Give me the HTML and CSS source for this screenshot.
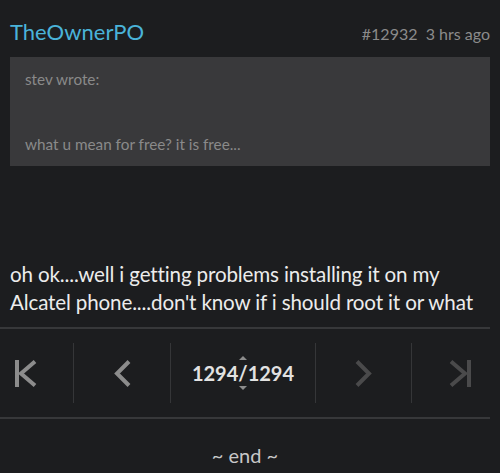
FILE: index.html
```html
<!DOCTYPE html>
<html>
<head>
<meta charset="utf-8">
<link rel="stylesheet" href="styles.css">
</head>
<body>
<div class="post">
  <div class="post-header">
    <span class="username">TheOwnerPO</span>
    <span class="meta">#12932&nbsp; 3 hrs ago</span>
  </div>
  <div class="quote">
    <div class="quote-author">stev wrote:</div>
    <div class="quote-text">what u mean for free? it is free...</div>
  </div>
  <div class="post-body">oh ok....well i getting problems installing it on my Alcatel phone....don't know if i should root it or what</div>
</div>
<nav class="pager">
  <div class="cell first">
    <svg width="22" height="27" viewBox="0 0 22 27"><path d="M2 0V27" stroke="#8c8c8c" stroke-width="4" fill="none"/><path d="M20 1.5L6 13.5L20 25.5" stroke="#8c8c8c" stroke-width="4" fill="none"/></svg>
  </div>
  <div class="cell">
    <svg width="17" height="27" viewBox="0 0 17 27"><path d="M15 1.5L3 13.5L15 25.5" stroke="#8c8c8c" stroke-width="4" fill="none"/></svg>
  </div>
  <div class="cell page">
    <span class="num">1294</span><span class="slash">/<i class="tri up"></i><i class="tri down"></i></span><span class="num">1294</span>
  </div>
  <div class="cell">
    <svg width="17" height="27" viewBox="0 0 17 27"><path d="M2 1.5L14 13.5L2 25.5" stroke="#4a4a4b" stroke-width="4" fill="none"/></svg>
  </div>
  <div class="cell last">
    <svg width="22" height="27" viewBox="0 0 22 27"><path d="M20 0V27" stroke="#4a4a4b" stroke-width="4" fill="none"/><path d="M2 1.5L16 13.5L2 25.5" stroke="#4a4a4b" stroke-width="4" fill="none"/></svg>
  </div>
</nav>
<div class="end">~ end ~</div>
</body>
</html>
```

FILE: styles.css
```css
html, body {
  margin: 0;
  padding: 0;
  background: #1c1d1f;
}
body {
  font-family: Lato, "Open Sans", sans-serif;
  width: 500px;
  height: 473px;
  overflow: hidden;
}
.post {
  padding: 0 10px;
}
.post-header {
  display: flex;
  justify-content: space-between;
  align-items: baseline;
  padding-top: 17px;
  margin-bottom: 8px;
  line-height: 30px;
}
.username {
  font-size: 22px;
  color: #4ab3d9;
}
.meta {
  font-size: 16px;
  color: #8b8b8b;
}
.quote {
  background: #39393b;
  height: 109px;
  box-sizing: border-box;
  padding: 11px 15px 0;
  color: #8a8a8a;
  font-size: 15.3px;
  line-height: 22px;
}
.quote-text {
  margin-top: 43px;
}
.post-body {
  margin-top: 94px;
  font-size: 20.6px;
  line-height: 28px;
  letter-spacing: -0.15px;
  color: #ececec;
}
.pager {
  margin-top: 11px;
  width: 490px;
  height: 92px;
  box-sizing: border-box;
  border-top: 2px solid #37383a;
  border-bottom: 2px solid #37383a;
  display: grid;
  grid-template-columns: 73px 97px 145px 96px 1fr;
  padding: 14px 0;
}
.cell {
  display: flex;
  align-items: center;
  justify-content: center;
  border-left: 1px solid #353638;
}
.cell.first {
  border-left: none;
  justify-content: flex-start;
  padding-left: 15px;
}
.cell.last {
  justify-content: flex-end;
  padding-right: 19px;
}
.page {
  font-size: 20px;
  font-weight: 700;
  color: #e2e2e2;
}
.slash {
  position: relative;
}
.tri {
  position: absolute;
  left: 50%;
  margin-left: -4px;
  width: 0;
  height: 0;
  border-left: 4px solid transparent;
  border-right: 4px solid transparent;
}
.tri.up {
  top: -5px;
  border-bottom: 4px solid #8c8c8c;
}
.tri.down {
  bottom: -5px;
  border-top: 4px solid #8c8c8c;
}
.end {
  text-align: center;
  font-size: 20px;
  line-height: 24px;
  color: #c8c8c8;
  padding-top: 24px;
  margin-left: -10px;
}
```
